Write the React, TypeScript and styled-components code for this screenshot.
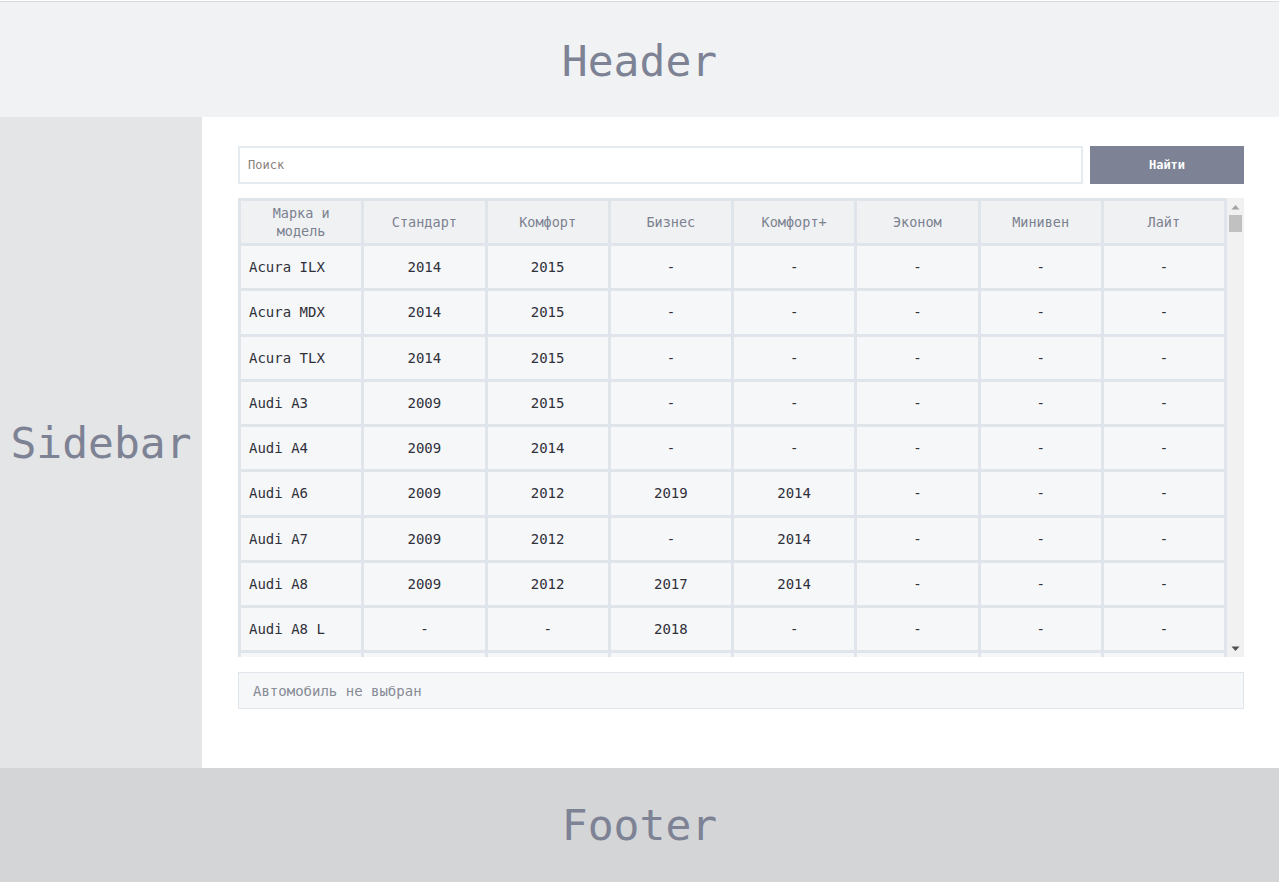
import React from "react";
import styled, { createGlobalStyle } from "styled-components";

const GlobalStyle = createGlobalStyle`
  html, body { margin: 0; padding: 0; background: #ffffff; }
  body { font-family: "DejaVu Sans Mono", "Liberation Mono", monospace; }
  * { box-sizing: border-box; }
`;

const Page = styled.div`
  display: grid;
  grid-template-columns: 202px 1fr;
  grid-template-rows: 116px 651px 114px;
  height: 882px;
  padding-top: 1px;
  grid-template-areas:
    "header header"
    "sidebar main"
    "footer footer";
`;

const Band = styled.div<{ $area: string; $bg: string }>`
  grid-area: ${(p) => p.$area};
  background: ${(p) => p.$bg};
  display: flex;
  align-items: center;
  justify-content: center;
  color: #7d8294;
  font-size: 43px;
  font-family: "DejaVu Sans Mono", monospace;
`;

const HeaderBand = styled(Band)`
  border-top: 1px solid #d9dadc;
  padding-top: 2px;
`;

const Main = styled.main`
  grid-area: main;
  background: #ffffff;
  padding: 29px 35px 0 36px;
  display: flex;
  flex-direction: column;
  min-width: 0;
`;

const SearchRow = styled.div`
  display: flex;
  gap: 7px;
  height: 38px;
`;

const SearchInput = styled.input`
  flex: 1;
  height: 38px;
  border: 2px solid #e6ebf0;
  background: #fff;
  padding: 0 8px;
  font-family: "DejaVu Sans Mono", monospace;
  font-size: 12px;
  outline: none;
  &::placeholder { color: #8b807b; }
`;

const SearchButton = styled.button`
  width: 154px;
  height: 38px;
  border: none;
  background: #7d8294;
  color: #ffffff;
  font-family: "DejaVu Sans Mono", monospace;
  font-size: 12px;
  font-weight: 700;
  cursor: pointer;
`;

const TableFrame = styled.div`
  margin-top: 14px;
  height: 459px;
  display: flex;
`;

const TableScroll = styled.div`
  flex: 1;
  min-width: 0;
  overflow-y: auto;
  overflow-x: hidden;
  scrollbar-width: none;
  &::-webkit-scrollbar { display: none; }
`;

const ScrollTrack = styled.div`
  width: 17px;
  flex: none;
  background: #f1f1f1;
  display: flex;
  flex-direction: column;
`;

const ScrollArrow = styled.div`
  height: 17px;
  display: flex;
  align-items: center;
  justify-content: center;
`;

const ScrollThumb = styled.div`
  height: 17px;
  margin: 0 2px;
  background: #c1c1c1;
`;

const ScrollGap = styled.div`
  flex: 1;
`;

const Table = styled.table`
  width: 100%;
  border-collapse: collapse;
  table-layout: fixed;
  font-family: "DejaVu Sans Mono", monospace;
  font-size: 14px;
`;

const Th = styled.th`
  position: sticky;
  top: 0;
  background: #f0f1f3;
  color: #7b8190;
  font-weight: normal;
  font-size: 13.5px;
  line-height: 18px;
  padding: 3px 8px;
  border: 3px solid #dfe5eb;
  text-align: center;
  height: 44px;
`;

const Td = styled.td<{ $first?: boolean }>`
  background: #f6f7f9;
  color: #30303a;
  font-weight: normal;
  line-height: 18.25px;
  padding: 12px 8px;
  border: 3px solid #dfe5eb;
  text-align: ${(p) => (p.$first ? "left" : "center")};
  white-space: nowrap;
`;

const Status = styled.div`
  margin-top: 15px;
  height: 37px;
  border: 1px solid #dfe5eb;
  background: #f6f7f9;
  color: #878b95;
  font-size: 14px;
  display: flex;
  align-items: center;
  padding-left: 14px;
`;

const columns = ["Марка и модель", "Стандарт", "Комфорт", "Бизнес", "Комфорт+", "Эконом", "Минивен", "Лайт"];

type Row = [string, ...string[]];

const rows: Row[] = [
  ["Acura ILX", "2014", "2015", "-", "-", "-", "-", "-"],
  ["Acura MDX", "2014", "2015", "-", "-", "-", "-", "-"],
  ["Acura TLX", "2014", "2015", "-", "-", "-", "-", "-"],
  ["Audi A3", "2009", "2015", "-", "-", "-", "-", "-"],
  ["Audi A4", "2009", "2014", "-", "-", "-", "-", "-"],
  ["Audi A6", "2009", "2012", "2019", "2014", "-", "-", "-"],
  ["Audi A7", "2009", "2012", "-", "2014", "-", "-", "-"],
  ["Audi A8", "2009", "2012", "2017", "2014", "-", "-", "-"],
  ["Audi A8 L", "-", "-", "2018", "-", "-", "-", "-"],
  ["Audi Q3", "2012", "2015", "-", "-", "-", "-", "-"],
];

export default function App() {
  return (
    <>
      <GlobalStyle />
      <Page>
        <HeaderBand $area="header" $bg="#f1f2f4">Header</HeaderBand>
        <Band $area="sidebar" $bg="#e4e5e7">Sidebar</Band>
        <Main>
          <SearchRow>
            <SearchInput placeholder="Поиск" />
            <SearchButton>Найти</SearchButton>
          </SearchRow>
          <TableFrame>
            <TableScroll>
              <Table>
                <thead>
                  <tr>
                    {columns.map((c) => (
                      <Th key={c}>{c}</Th>
                    ))}
                  </tr>
                </thead>
                <tbody>
                  {rows.map((r, i) => (
                    <tr key={i}>
                      {r.map((cell, j) => (
                        <Td key={j} $first={j === 0}>
                          {cell}
                        </Td>
                      ))}
                    </tr>
                  ))}
                </tbody>
              </Table>
            </TableScroll>
            <ScrollTrack>
              <ScrollArrow>
                <svg width="9" height="6" viewBox="0 0 9 6">
                  <polygon points="0.5,5.5 4.5,1 8.5,5.5" fill="#a3a3a3" />
                </svg>
              </ScrollArrow>
              <ScrollThumb />
              <ScrollGap />
              <ScrollArrow>
                <svg width="9" height="6" viewBox="0 0 9 6">
                  <polygon points="0.5,0.5 8.5,0.5 4.5,5" fill="#505050" />
                </svg>
              </ScrollArrow>
            </ScrollTrack>
          </TableFrame>
          <Status>Автомобиль не выбран</Status>
        </Main>
        <Band $area="footer" $bg="#d4d5d7">Footer</Band>
      </Page>
    </>
  );
}
